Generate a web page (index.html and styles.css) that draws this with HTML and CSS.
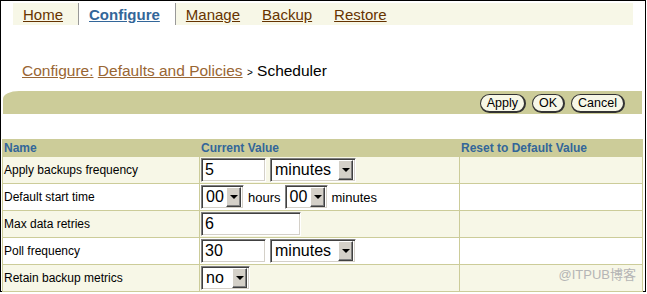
FILE: index.html
```html
<!DOCTYPE html>
<html lang="en">

<head>
  <meta charset="UTF-8">
  <title>Scheduler</title>
  <link rel="stylesheet" href="styles.css">
</head>

<body>
  <div class="frame">
    <div class="tabs">
      <a class="tab" href="#">Home</a>
      <a class="tab tab-on" href="#">Configure</a>
      <a class="tab tab-after" href="#">Manage</a>
      <a class="tab" href="#">Backup</a>
      <a class="tab" href="#">Restore</a>
    </div>

    <div class="crumbs">
      <a href="#">Configure:</a> <a href="#">Defaults and Policies</a> <span class="crumb-sep">&gt;</span> Scheduler
    </div>

    <div class="actions">
      <button class="btn">Apply</button>
      <button class="btn">OK</button>
      <button class="btn">Cancel</button>
    </div>

    <table class="settings">
      <thead>
        <tr>
          <th class="col-name">Name</th>
          <th class="col-value">Current Value</th>
          <th>Reset to Default Value</th>
        </tr>
      </thead>
      <tbody>
        <tr>
          <td>Apply backups frequency</td>
          <td>
            <div class="ctl">
              <span class="field field-sm">5</span>
              <span class="pick pick-min"><span class="pick-text">minutes</span><span class="pick-btn"></span></span>
            </div>
          </td>
          <td></td>
        </tr>
        <tr>
          <td>Default start time</td>
          <td>
            <div class="ctl">
              <span class="pick pick-hr"><span class="pick-text">00</span><span class="pick-btn"></span></span>
              <span class="unit">hours</span>
              <span class="pick pick-hr"><span class="pick-text">00</span><span class="pick-btn"></span></span>
              <span class="unit">minutes</span>
            </div>
          </td>
          <td></td>
        </tr>
        <tr>
          <td>Max data retries</td>
          <td>
            <div class="ctl">
              <span class="field field-md">6</span>
            </div>
          </td>
          <td></td>
        </tr>
        <tr>
          <td>Poll frequency</td>
          <td>
            <div class="ctl">
              <span class="field field-sm">30</span>
              <span class="pick pick-min"><span class="pick-text">minutes</span><span class="pick-btn"></span></span>
            </div>
          </td>
          <td></td>
        </tr>
        <tr>
          <td>Retain backup metrics</td>
          <td>
            <div class="ctl">
              <span class="pick pick-no"><span class="pick-text">no</span><span class="pick-btn"></span></span>
            </div>
          </td>
          <td></td>
        </tr>
      </tbody>
    </table>

    <div class="mark">@ITPUB博客</div>
  </div>
</body>

</html>
```

FILE: styles.css
```css
body {
  margin: 0;
  background: #fff;
  font-family: 'Liberation Sans', Arial, 'Noto Sans CJK SC', sans-serif;
  color: #000;
}

.frame {
  position: relative;
  width: 644px;
  height: 290px;
  border: 1px solid #000;
}

/* top tabs */
.tabs {
  display: flex;
  margin: 2px 0 0 12px;
  width: 620px;
  height: 22px;
  background: #f7f7e7;
}

.tab {
  display: flex;
  align-items: center;
  padding: 0 11px;
  font-size: 15px;
  color: #663300;
}

.tab:first-child {
  padding: 0 15px 0 10px;
  border-right: 1px solid #999;
}

.tab-on {
  padding: 0 15px 0 10px;
  background: #fff;
  color: #336699;
  font-weight: bold;
  border-right: 1px solid #999;
}

.tab-after {
  padding-left: 10px;
}

/* breadcrumb */
.crumbs {
  margin: 36px 0 0 21px;
  height: 19px;
  font-size: 15.5px;
  line-height: 19px;
}

.crumbs a {
  color: #996633;
}

.crumb-sep {
  font-size: 10px;
}

/* olive action bar */
.actions {
  display: flex;
  justify-content: flex-end;
  gap: 6px;
  margin: 11px 0 0 2px;
  width: 622px;
  height: 20px;
  padding: 3px 17px 0 0;
  background: #cccc99;
  border-top-left-radius: 16px 8px;
}

.btn {
  height: 19px;
  padding: 0 6px;
  font-family: inherit;
  font-size: 12.5px;
  line-height: 15px;
  color: #000;
  background: #f7f7e7;
  border: 1px solid #333;
  border-right-width: 2px;
  border-bottom-width: 2px;
  border-radius: 10px;
}

/* settings table */
.settings {
  margin: 25px 0 0 1px;
  width: 641px;
  border-collapse: collapse;
  font-size: 12px;
}

.settings th,
.settings td {
  border: 1px solid #cccc99;
  padding: 0 1px;
  text-align: left;
  vertical-align: middle;
}

.settings th {
  height: 16px;
  background: #cccc99;
  color: #336699;
  font-weight: bold;
}

.col-name {
  width: 194px;
}

.col-value {
  width: 257px;
}

.settings td {
  height: 26px;
}

.settings tbody tr:nth-child(odd) {
  background: #f7f7e7;
}

.settings tbody tr:nth-child(even) {
  background: #fff;
}

.ctl {
  display: flex;
  align-items: center;
  gap: 4px;
}

.field,
.pick {
  display: flex;
  align-items: center;
  box-sizing: border-box;
  height: 24px;
  background: #fff;
  font-size: 16px;
  border: 1px solid;
  border-color: #808080 #fff #fff #808080;
  box-shadow: inset 1px 1px 0 #404040, inset -1px -1px 0 #d4d0c8;
}

.field {
  padding-left: 3px;
}

.field-sm {
  width: 65px;
}

.field-md {
  width: 100px;
}

.pick-min {
  width: 86px;
}

.pick-hr {
  width: 43px;
}

.pick-no {
  width: 49px;
}

.pick-text {
  flex: 1;
  padding-left: 4px;
}

.pick-btn {
  position: relative;
  box-sizing: border-box;
  width: 15px;
  height: 20px;
  margin-right: 2px;
  background: #d4d0c8;
  border: 1px solid;
  border-color: #fff #404040 #404040 #fff;
  box-shadow: inset -1px -1px 0 #808080;
}

.pick-btn::after {
  content: '';
  position: absolute;
  left: 3px;
  top: 7px;
  border-left: 4px solid transparent;
  border-right: 4px solid transparent;
  border-top: 4px solid #000;
}

.unit {
  font-size: 13px;
}

.mark {
  position: absolute;
  right: 9px;
  bottom: 8px;
  font-size: 13px;
  color: #b5b5b5;
}
```
